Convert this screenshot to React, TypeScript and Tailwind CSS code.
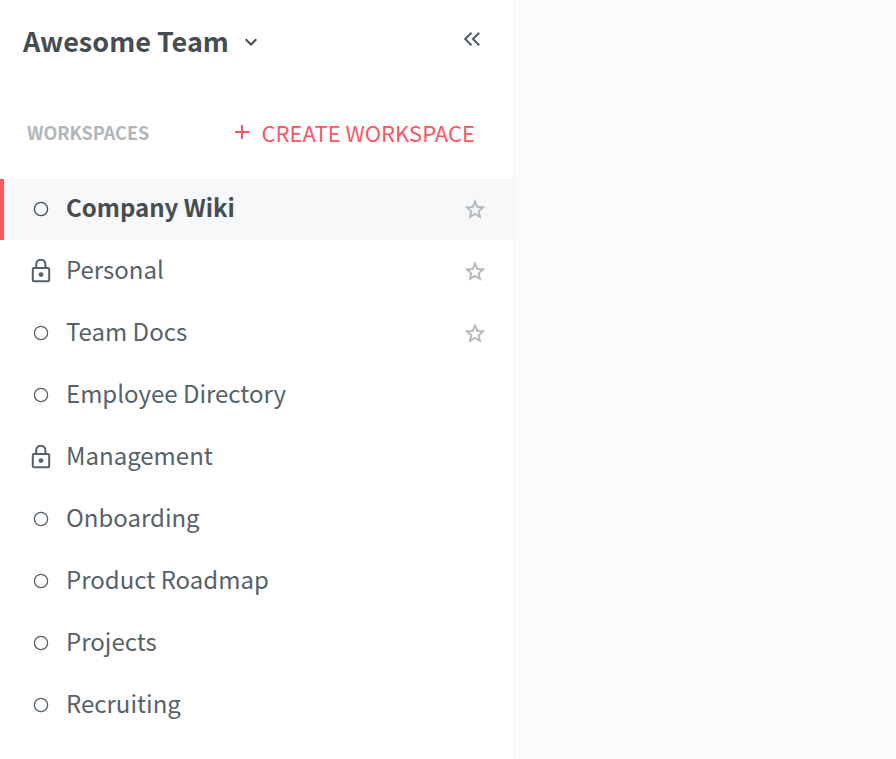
import { useState } from "react";

type Workspace = {
  name: string;
  locked?: boolean;
  starrable?: boolean;
};

const workspaces: Workspace[] = [
  { name: "Company Wiki", starrable: true },
  { name: "Personal", locked: true, starrable: true },
  { name: "Team Docs", starrable: true },
  { name: "Employee Directory" },
  { name: "Management", locked: true },
  { name: "Onboarding" },
  { name: "Product Roadmap" },
  { name: "Projects" },
  { name: "Recruiting" },
];

function LockIcon() {
  return (
    <svg className="h-6 w-5" viewBox="0 0 20 24" fill="none" stroke="currentColor" strokeWidth="2" aria-hidden="true">
      <rect x="1.8" y="9" width="16.4" height="13.2" rx="1.2" />
      <path d="M5.2 9V5.3a4.6 4.6 0 0 1 9.2 0V9" />
      <circle cx="10" cy="15.6" r="2.4" fill="currentColor" stroke="none" />
    </svg>
  );
}

function CircleIcon() {
  return (
    <svg className="size-4" viewBox="0 0 16 16" fill="none" stroke="currentColor" strokeWidth="1.3" aria-hidden="true">
      <circle cx="8" cy="8" r="6.6" />
    </svg>
  );
}

function StarIcon() {
  return (
    <svg className="size-5" viewBox="2 2 20 19" fill="currentColor" stroke="currentColor" strokeWidth="0.3" aria-hidden="true">
      <path d="M22 9.24l-7.19-.62L12 2 9.19 8.63 2 9.24l5.46 4.73L5.82 21 12 17.27 18.18 21l-1.63-7.03L22 9.24zM12 15.4l-3.76 2.27 1-4.28-3.32-2.88 4.38-.38L12 6.1l1.71 4.04 4.38.38-3.32 2.88 1 4.28L12 15.4z" />
    </svg>
  );
}

export default function App() {
  const [active, setActive] = useState("Company Wiki");

  return (
    <div className="flex min-h-screen bg-[#fafbfd] font-['Noto_Sans_CJK_SC',sans-serif] text-[#56616a]">
      <aside className="flex w-3/5 max-w-[515px] shrink-0 flex-col border-r-2 border-[#f5f6f8] bg-white">
        <header className="flex items-start justify-between pt-[25px] pr-[33px] pl-[23px]">
          <button className="flex items-center gap-4 text-[27px] leading-8 font-bold text-[#464d52]">
            Awesome Team
            <svg className="mt-0.5 size-3" viewBox="0 0 12 12" fill="none" stroke="currentColor" strokeWidth="2" aria-hidden="true">
              <path d="M0.7 3.2L6 8.5l5.3-5.3" />
            </svg>
          </button>
          <button className="py-1.5" aria-label="Collapse sidebar">
            <svg className="size-4" viewBox="0 0 16 16" fill="none" stroke="currentColor" strokeWidth="2.2" aria-hidden="true">
              <path d="M7.5 1.8L1.2 8l6.3 6.2M15.2 1.8L9 8l6.2 6.2" />
            </svg>
          </button>
        </header>

        <div className="flex items-center justify-between pt-[59px] pr-[38px] pb-[31px] pl-[27px]">
          <h2 className="text-[18px] font-bold text-[#b0b6ba]">WORKSPACES</h2>
          <button className="flex items-center gap-3 text-[22px] leading-8 text-[#fd5661]">
            <svg className="size-4" viewBox="0 0 16 16" fill="none" stroke="currentColor" strokeWidth="2" aria-hidden="true">
              <path d="M8 1v14M1 8h14" />
            </svg>
            CREATE WORKSPACE
          </button>
        </div>

        <ul className="grid flex-1 auto-rows-fr gap-px pb-6">
          {workspaces.map(({ name, locked, starrable }) => (
            <li
              key={name}
              className={`flex items-center justify-between border-l-4 pr-7 ${
                name === active ? "border-[#fd5661] bg-[#f7f8fa] font-bold text-[#464d52]" : "border-transparent"
              }`}
            >
              <button className="flex flex-1 items-center gap-[15px] pl-[27px] text-left text-[24px] leading-8" onClick={() => setActive(name)}>
                <span className="flex w-5 justify-center">{locked ? <LockIcon /> : <CircleIcon />}</span>
                <span className="pb-1">{name}</span>
              </button>
              {starrable && (
                <button className="text-[#b0b6ba]" aria-label={`Star ${name}`}>
                  <StarIcon />
                </button>
              )}
            </li>
          ))}
        </ul>
      </aside>
      <main className="flex-1" />
    </div>
  );
}
